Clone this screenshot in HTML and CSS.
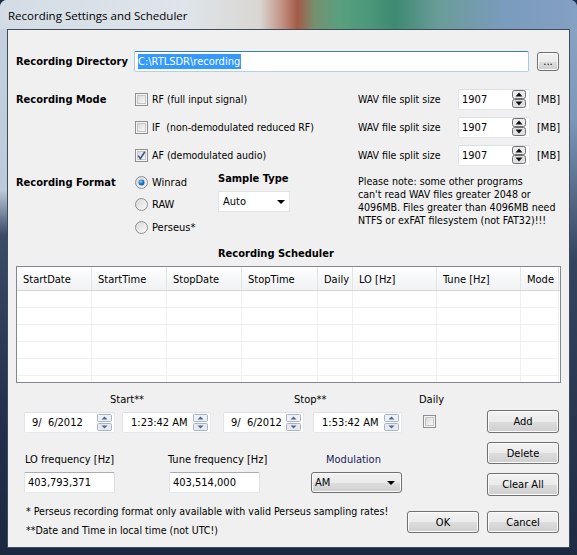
FILE: index.html
```html
<!DOCTYPE html>
<html>
<head>
<meta charset="utf-8">
<link rel="stylesheet" href="styles.css">
</head>
<body>
<div class="window">
  <div class="titlebar"><span class="title">Recording Settings and Scheduler</span></div>
  <div class="client">

    <div class="dir-row">
      <div class="bold dir-lbl">Recording Directory</div>
      <div class="textbox focused dir-input"><span class="sel">C:\RTLSDR\recording</span></div>
      <button class="btn browse">...</button>
    </div>

    <div class="mode-grid">
      <div class="bold">Recording Mode</div>
      <div class="check"><svg class="cb" width="13" height="13" viewBox="0 0 13 13"><defs><linearGradient id="cbg" x1="0" y1="0" x2="1" y2="1"><stop offset="0" stop-color="#d8d8d8"/><stop offset="1" stop-color="#fbfbfb"/></linearGradient></defs><rect x="0.5" y="0.5" width="12" height="12" fill="#f4f4f4" stroke="#8e8f8f"/><rect x="2.5" y="2.5" width="8" height="8" fill="url(#cbg)" stroke="#c6c6c6"/></svg><span>RF (full input signal)</span></div>
      <div class="wav">WAV file split size</div>
      <div class="spinbox"><span>1907</span><svg width="14" height="18" viewBox="0 0 14 18"><rect x="0.5" y="0.5" width="13" height="8" rx="2" fill="#ececec" stroke="#6f6f6f"/><rect x="0.5" y="9.5" width="13" height="8" rx="2" fill="#e2e2e2" stroke="#6f6f6f"/><path d="M3.5 6.5 L7 2.5 L10.5 6.5 Z" fill="#111"/><path d="M3.5 11.5 L10.5 11.5 L7 15.5 Z" fill="#111"/></svg></div>
      <div class="unit">[MB]</div>

      <div></div>
      <div class="check"><svg class="cb" width="13" height="13" viewBox="0 0 13 13"><rect x="0.5" y="0.5" width="12" height="12" fill="#f4f4f4" stroke="#8e8f8f"/><rect x="2.5" y="2.5" width="8" height="8" fill="url(#cbg)" stroke="#c6c6c6"/></svg><span class="pre">IF  (non-demodulated reduced RF)</span></div>
      <div class="wav">WAV file split size</div>
      <div class="spinbox"><span>1907</span><svg width="14" height="18" viewBox="0 0 14 18"><rect x="0.5" y="0.5" width="13" height="8" rx="2" fill="#ececec" stroke="#6f6f6f"/><rect x="0.5" y="9.5" width="13" height="8" rx="2" fill="#e2e2e2" stroke="#6f6f6f"/><path d="M3.5 6.5 L7 2.5 L10.5 6.5 Z" fill="#111"/><path d="M3.5 11.5 L10.5 11.5 L7 15.5 Z" fill="#111"/></svg></div>
      <div class="unit">[MB]</div>

      <div></div>
      <div class="check"><svg class="cb" width="13" height="13" viewBox="0 0 13 13"><rect x="0.5" y="0.5" width="12" height="12" fill="#f4f4f4" stroke="#8e8f8f"/><rect x="2.5" y="2.5" width="8" height="8" fill="url(#cbg)" stroke="#c6c6c6"/><path d="M3.2 6.6 L5.4 9.6 L9.8 2.8" fill="none" stroke="#3a5596" stroke-width="1.6"/></svg><span>AF (demodulated audio)</span></div>
      <div class="wav">WAV file split size</div>
      <div class="spinbox"><span>1907</span><svg width="14" height="18" viewBox="0 0 14 18"><rect x="0.5" y="0.5" width="13" height="8" rx="2" fill="#ececec" stroke="#6f6f6f"/><rect x="0.5" y="9.5" width="13" height="8" rx="2" fill="#e2e2e2" stroke="#6f6f6f"/><path d="M3.5 6.5 L7 2.5 L10.5 6.5 Z" fill="#111"/><path d="M3.5 11.5 L10.5 11.5 L7 15.5 Z" fill="#111"/></svg></div>
      <div class="unit">[MB]</div>
    </div>

    <div class="format-grid">
      <div class="bold fmt-lbl">Recording Format</div>
      <div class="radios">
        <div class="radio"><svg width="13" height="13" viewBox="0 0 13 13"><defs><linearGradient id="rg" x1="0" y1="0" x2="1" y2="1"><stop offset="0" stop-color="#d6d6d6"/><stop offset="1" stop-color="#fcfcfc"/></linearGradient><radialGradient id="rdot" cx="0.4" cy="0.35" r="0.7"><stop offset="0" stop-color="#8fd2ff"/><stop offset="0.5" stop-color="#1f7fcf"/><stop offset="1" stop-color="#154e8c"/></radialGradient></defs><circle cx="6.5" cy="6.5" r="6" fill="url(#rg)" stroke="#8e8f8f"/><circle cx="6.5" cy="6.5" r="3" fill="url(#rdot)"/></svg><span>Winrad</span></div>
        <div class="radio"><svg width="13" height="13" viewBox="0 0 13 13"><circle cx="6.5" cy="6.5" r="6" fill="url(#rg)" stroke="#8e8f8f"/></svg><span>RAW</span></div>
        <div class="radio"><svg width="13" height="13" viewBox="0 0 13 13"><circle cx="6.5" cy="6.5" r="6" fill="url(#rg)" stroke="#8e8f8f"/></svg><span>Perseus*</span></div>
      </div>
      <div class="sample">
        <div class="bold">Sample Type</div>
        <div class="combo-flat"><span>Auto</span><svg width="8" height="4" viewBox="0 0 8 4"><path d="M0 0 L8 0 L4 4 Z" fill="#000"/></svg></div>
      </div>
      <div class="note">Please note: some other programs<br>can't read WAV files greater 2048 or<br>4096MB. Files greater than 4096MB need<br>NTFS or exFAT filesystem (not FAT32)!!!</div>
    </div>

    <div class="bold sched-title">Recording Scheduler</div>

    <div class="table">
      <div class="thead">
        <div class="th">StartDate</div><div class="th">StartTime</div><div class="th">StopDate</div><div class="th">StopTime</div><div class="th">Daily</div><div class="th">LO [Hz]</div><div class="th">Tune [Hz]</div><div class="th">Mode</div>
      </div>
      <div class="tbody">
        <div class="tr"><div></div><div></div><div></div><div></div><div></div><div></div><div></div><div></div></div>
        <div class="tr"><div></div><div></div><div></div><div></div><div></div><div></div><div></div><div></div></div>
        <div class="tr"><div></div><div></div><div></div><div></div><div></div><div></div><div></div><div></div></div>
        <div class="tr"><div></div><div></div><div></div><div></div><div></div><div></div><div></div><div></div></div>
        <div class="tr"><div></div><div></div><div></div><div></div><div></div><div></div><div></div><div></div></div>
        <div class="tr"><div></div><div></div><div></div><div></div><div></div><div></div><div></div><div></div></div>
      </div>
    </div>

    <div class="bottom">
      <div class="bottom-left">
        <div class="sched-labels">
          <span class="l-start">Start**</span><span class="l-stop">Stop**</span><span>Daily</span>
        </div>
        <div class="pickers">
          <div class="picker date1"><span>9/&nbsp;&nbsp;6/2012</span><svg width="15" height="17" viewBox="0 0 15 17"><rect x="0.5" y="0.5" width="14" height="7" rx="1" fill="#eef1f5" stroke="#aab3c2"/><rect x="0.5" y="9.5" width="14" height="7" rx="1" fill="#e6eaf0" stroke="#aab3c2"/><path d="M4.5 5.5 L7.5 2.5 L10.5 5.5 Z" fill="#4d6391"/><path d="M4.5 11.5 L10.5 11.5 L7.5 14.5 Z" fill="#4d6391"/></svg></div>
          <div class="picker time1"><span>1:23:42 AM</span><svg width="15" height="17" viewBox="0 0 15 17"><rect x="0.5" y="0.5" width="14" height="7" rx="1" fill="#eef1f5" stroke="#aab3c2"/><rect x="0.5" y="9.5" width="14" height="7" rx="1" fill="#e6eaf0" stroke="#aab3c2"/><path d="M4.5 5.5 L7.5 2.5 L10.5 5.5 Z" fill="#4d6391"/><path d="M4.5 11.5 L10.5 11.5 L7.5 14.5 Z" fill="#4d6391"/></svg></div>
          <div class="picker date2"><span>9/&nbsp;&nbsp;6/2012</span><svg width="15" height="17" viewBox="0 0 15 17"><rect x="0.5" y="0.5" width="14" height="7" rx="1" fill="#eef1f5" stroke="#aab3c2"/><rect x="0.5" y="9.5" width="14" height="7" rx="1" fill="#e6eaf0" stroke="#aab3c2"/><path d="M4.5 5.5 L7.5 2.5 L10.5 5.5 Z" fill="#4d6391"/><path d="M4.5 11.5 L10.5 11.5 L7.5 14.5 Z" fill="#4d6391"/></svg></div>
          <div class="picker time2"><span>1:53:42 AM</span><svg width="15" height="17" viewBox="0 0 15 17"><rect x="0.5" y="0.5" width="14" height="7" rx="1" fill="#eef1f5" stroke="#aab3c2"/><rect x="0.5" y="9.5" width="14" height="7" rx="1" fill="#e6eaf0" stroke="#aab3c2"/><path d="M4.5 5.5 L7.5 2.5 L10.5 5.5 Z" fill="#4d6391"/><path d="M4.5 11.5 L10.5 11.5 L7.5 14.5 Z" fill="#4d6391"/></svg></div>
          <svg class="daily-cb" width="13" height="13" viewBox="0 0 13 13"><rect x="0.5" y="0.5" width="12" height="12" fill="#f4f4f4" stroke="#8e8f8f"/><rect x="2.5" y="2.5" width="8" height="8" fill="url(#cbg)" stroke="#c6c6c6"/></svg>
        </div>
        <div class="freq-labels">
          <span class="l-lo">LO frequency [Hz]</span><span class="l-tune">Tune frequency [Hz]</span><span class="l-mod">Modulation</span>
        </div>
        <div class="freq-inputs">
          <div class="textbox lo-in">403,793,371</div>
          <div class="textbox tune-in">403,514,000</div>
          <div class="btn combo-btn"><span>AM</span><svg width="8" height="4" viewBox="0 0 8 4"><path d="M0 0 L8 0 L4 4 Z" fill="#000"/></svg></div>
        </div>
        <div class="foot-row">
          <div class="foot">* Perseus recording format only available with valid Perseus sampling rates!<br>**Date and Time in local time (not UTC!)</div>
          <button class="btn ok">OK</button>
        </div>
      </div>
      <div class="bottom-right">
        <button class="btn b-add">Add</button>
        <button class="btn b-del">Delete</button>
        <button class="btn b-clear">Clear All</button>
        <button class="btn b-cancel">Cancel</button>
      </div>
    </div>

  </div>
</div>
</body>
</html>
```
FILE: styles.css
```css
* { box-sizing: border-box; }
html, body { margin: 0; padding: 0; }
body {
  width: 577px;
  height: 555px;
  overflow: hidden;
  background: #1f2b45;
  font-family: "DejaVu Sans Condensed", "Liberation Sans", sans-serif;
  font-size: 11px;
  color: #000;
}
.window {
  width: 577px;
  height: 555px;
  display: flex;
  flex-direction: column;
  border-radius: 7px 7px 0 0;
  background:
    linear-gradient(to bottom, #8ea6c4 0, #7d97b8 120px, #34445f 260px, #1f2b45 100%) right top / 7px 100% no-repeat,
    linear-gradient(to bottom, #c6d2df 0, #bccad9 190px, #3a4a69 235px, #243250 400px, #1b2740 100%);
}
.titlebar {
  height: 29px;
  padding-left: 8px;
  display: flex;
  align-items: center;
  border-radius: 7px 7px 0 0;
  background: linear-gradient(to right, #d3dce5 0%, #dfe5ea 32%, #d9d6d2 45%, #c09080 49%, #a45a48 51.5%, #76906f 54.5%, #58a07f 59%, #4b977a 64%, #3d8a72 68.5%, #6a9c98 76%, #7a9bbd 87%, #84a0c2 100%);
}
.title {
  font-family: "Open Sans", "Noto Sans", sans-serif;
  font-size: 11.5px;
  color: #000;
  padding-top: 1px;
}
.client {
  flex: 1;
  margin: 0 7px 7px 7px;
  background: #f0f0f0;
  border: 1px solid #3f4b5d;
  padding: 0 8px 0 8px;
  display: flex;
  flex-direction: column;
}
.bold { font-weight: bold; }
.pre { white-space: pre; }

/* directory */
.dir-row {
  margin-top: 21px;
  height: 21px;
  display: flex;
  align-items: center;
}
.dir-lbl { width: 118px; }
.textbox {
  background: #fff;
  border: 1px solid;
  border-color: #abadb3 #dbdfe6 #e3e9ef #e2e3ea;
  border-radius: 2px;
  height: 21px;
  display: flex;
  align-items: center;
  padding-left: 3px;
  white-space: nowrap;
}
.textbox.focused { border-color: #3d7bad #a4c9e3 #b5cfe7 #a4c9e3; }
.dir-input { width: 395px; }
.sel { background: #3399ff; color: #fff; line-height: 15px; padding-right: 1px; }
.btn {
  border: 1px solid #707070;
  border-radius: 3px;
  background: linear-gradient(to bottom, #f2f2f2 0%, #ebebeb 50%, #dddddd 51%, #cfcfcf 100%);
  box-shadow: inset 0 0 0 1px #fbfbfb;
  font-family: inherit;
  font-size: 11px;
  color: #000;
  padding: 0;
  margin: 0;
}
.browse { width: 22px; height: 19px; margin-left: 8px; line-height: 10px; }

/* mode */
.mode-grid {
  margin-top: 13px;
  display: grid;
  grid-template-columns: 119px 223px 100px 72px 1fr;
  grid-auto-rows: 28px;
  align-items: center;
}
.check, .radio { display: flex; align-items: center; }
.check svg, .radio svg { flex: none; }
.check span { margin-left: 4px; font-size: 10.5px; }
.radio span { margin-left: 4px; }
.wav { font-size: 10.5px; }
.spinbox {
  width: 72px;
  height: 21px;
  background: #fff;
  border: 1px solid;
  border-color: #dbdfe6 #e3e9ef #e3e9ef #e2e3ea;
  border-radius: 2px;
  display: flex;
  align-items: center;
  justify-content: space-between;
  padding: 0 3px 0 3px;
}
.unit { padding-left: 7px; }

/* format */
.format-grid {
  margin-top: 2px;
  display: grid;
  grid-template-columns: 119px 83px 140px 1fr;
}
.fmt-lbl { height: 22px; display: flex; align-items: center; }
.radios { display: flex; flex-direction: column; }
.radios .radio:nth-child(1) { height: 22px; }
.radios .radio:nth-child(2) { height: 23px; }
.radios .radio:nth-child(3) { height: 22px; }
.sample { padding-top: 1px; }
.sample .bold { line-height: 14px; }
.combo-flat {
  margin-top: 5px;
  width: 72px;
  height: 21px;
  background: #fff;
  border: 1px solid #e3e3e3;
  display: flex;
  align-items: center;
  justify-content: space-between;
  padding: 0 4px 0 4px;
}
.note { padding-top: 4px; line-height: 13px; white-space: nowrap; font-size: 10.6px; }

/* scheduler */
.sched-title { margin-top: 9px; line-height: 14px; padding-left: 202px; }
.table {
  margin-top: 5px;
  width: 545px;
  height: 117px;
  border: 1px solid #828790;
  background: #fff;
  overflow: hidden;
}
.thead, .tr {
  display: grid;
  grid-template-columns: 75px 75px 75px 76px 35px 84px 84px 38px;
}
.thead {
  height: 24px;
  background: linear-gradient(to bottom, #ffffff 0%, #f7f8f9 50%, #f1f2f4 100%);
  border-bottom: 1px solid #d5d5d5;
}
.th {
  border-right: 1px solid #e3e4e6;
  padding-left: 6px;
  padding-top: 2px;
  display: flex;
  align-items: center;
  white-space: nowrap;
}
.tr { height: 17px; }
.tr div { border-right: 1px solid #f0f0f0; border-bottom: 1px solid #f0f0f0; }

/* bottom */
.bottom { display: flex; }
.bottom-left { width: 463px; display: flex; flex-direction: column; }
.bottom-right { margin-left: 8px; width: 72px; display: flex; flex-direction: column; }
.sched-labels { margin-top: 10px; height: 14px; line-height: 14px; display: flex; padding-left: 94px; }
.l-start { width: 184px; }
.l-stop { width: 125px; }
.pickers { margin-top: 5px; display: flex; align-items: flex-start; padding-left: 8px; }
.picker {
  height: 21px;
  background: #fff;
  border: 1px solid;
  border-color: #dbdfe6 #e3e9ef #e3e9ef #e2e3ea;
  border-radius: 2px;
  display: flex;
  align-items: center;
  justify-content: space-between;
  padding: 0 2px 0 7px;
  white-space: nowrap;
}
.date1 { width: 91px; }
.time1 { width: 89px; margin-left: 7px; padding-left: 8px; }
.date2 { width: 81px; margin-left: 12px; }
.time2 { width: 89px; margin-left: 9px; padding-left: 8px; }
.daily-cb { margin-left: 21px; margin-top: 3px; }
.freq-labels { margin-top: 20px; height: 14px; line-height: 14px; display: flex; padding-left: 9px; }
.l-lo { width: 143px; }
.l-tune { width: 158px; }
.l-mod { color: #17235a; }
.freq-inputs { margin-top: 5px; display: flex; padding-left: 8px; }
.lo-in { width: 91px; }
.tune-in { width: 91px; margin-left: 54px; }
.combo-btn {
  width: 91px;
  height: 21px;
  margin-left: 51px;
  display: flex;
  align-items: center;
  justify-content: space-between;
  padding: 0 6px 0 3px;
}
.foot-row { display: flex; }
.foot { margin-top: 9px; width: 391px; padding-left: 10px; line-height: 19px; white-space: nowrap; font-size: 10.55px; }
.ok { width: 72px; height: 22px; margin-top: 18px; }
.b-add { height: 23px; margin-top: 27px; }
.b-del { height: 22px; margin-top: 9px; }
.b-clear { height: 23px; margin-top: 9px; }
.b-cancel { height: 22px; margin-top: 15px; }
```
